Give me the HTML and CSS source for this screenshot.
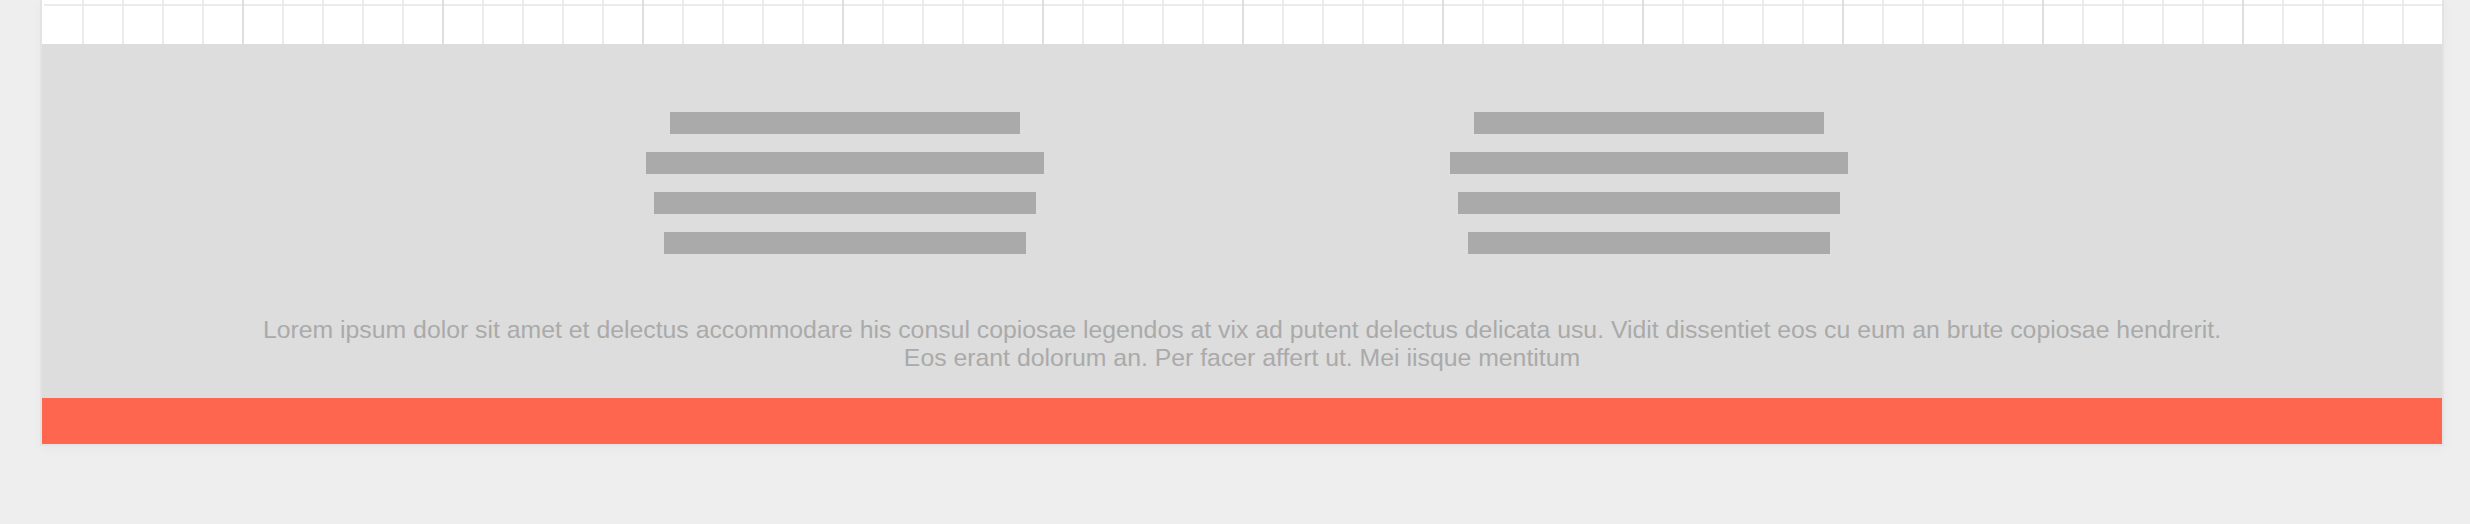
FILE: index.html
```html
<!DOCTYPE html>
<html lang="en">
<head>
<meta charset="utf-8">
<title>Layout preview</title>
<link rel="stylesheet" href="styles.css">
</head>
<body>
<div class="frame">
  <div class="grid-strip"></div>
  <section class="panel">
    <div class="columns">
      <div class="column">
        <span class="bar bar-a"></span>
        <span class="bar bar-b"></span>
        <span class="bar bar-c"></span>
        <span class="bar bar-d"></span>
      </div>
      <div class="column">
        <span class="bar bar-a"></span>
        <span class="bar bar-b"></span>
        <span class="bar bar-c"></span>
        <span class="bar bar-d"></span>
      </div>
    </div>
    <p class="lead">Lorem ipsum dolor sit amet et delectus accommodare his consul copiosae legendos at vix ad putent delectus delicata usu. Vidit dissentiet eos cu eum an brute copiosae hendrerit.<br>Eos erant dolorum an. Per facer affert ut. Mei iisque mentitum</p>
  </section>
  <div class="footer-bar"></div>
</div>
</body>
</html>
```

FILE: styles.css
```css
html, body {
  margin: 0;
  padding: 0;
}

body {
  background: #eeeeee;
  height: 524px;
  overflow: hidden;
  font-family: "Liberation Sans", Arial, sans-serif;
}

.frame {
  width: 2400px;
  margin-left: 40px;
  border: 2px solid #e3e3e3;
  border-top: 0;
  box-shadow: 0 3px 10px rgba(0, 0, 0, 0.03);
}

.grid-strip {
  height: 44px;
  background-color: #ffffff;
  background-image:
    repeating-linear-gradient(to right, transparent 0 198px, #dfdfdf 198px 200px),
    repeating-linear-gradient(to right, transparent 0 38px, #ebebeb 38px 40px),
    linear-gradient(to bottom, transparent 0 4px, #ebebeb 4px 6px, transparent 6px);
  background-position: 2px 0, 2px 0, 2px 0;
  background-repeat: no-repeat;
  background-size: 2398px 44px;
}

.panel {
  background: #dddddd;
  padding: 68px 0 26px;
  display: flex;
  flex-direction: column;
  gap: 62px;
}

.columns {
  display: flex;
  justify-content: center;
  padding-left: 10px;
}

.column {
  width: 804px;
  display: flex;
  flex-direction: column;
  align-items: center;
  gap: 18px;
}

.bar {
  display: block;
  height: 22px;
  background: #aaaaaa;
}

.bar-a { width: 350px; }
.bar-b { width: 398px; }
.bar-c { width: 382px; }
.bar-d { width: 362px; }

.lead {
  margin: 0;
  text-align: center;
  color: #aaaaaa;
  font-size: 24.8px;
  line-height: 28px;
}

.footer-bar {
  height: 46px;
  background: #ff6650;
}
```
